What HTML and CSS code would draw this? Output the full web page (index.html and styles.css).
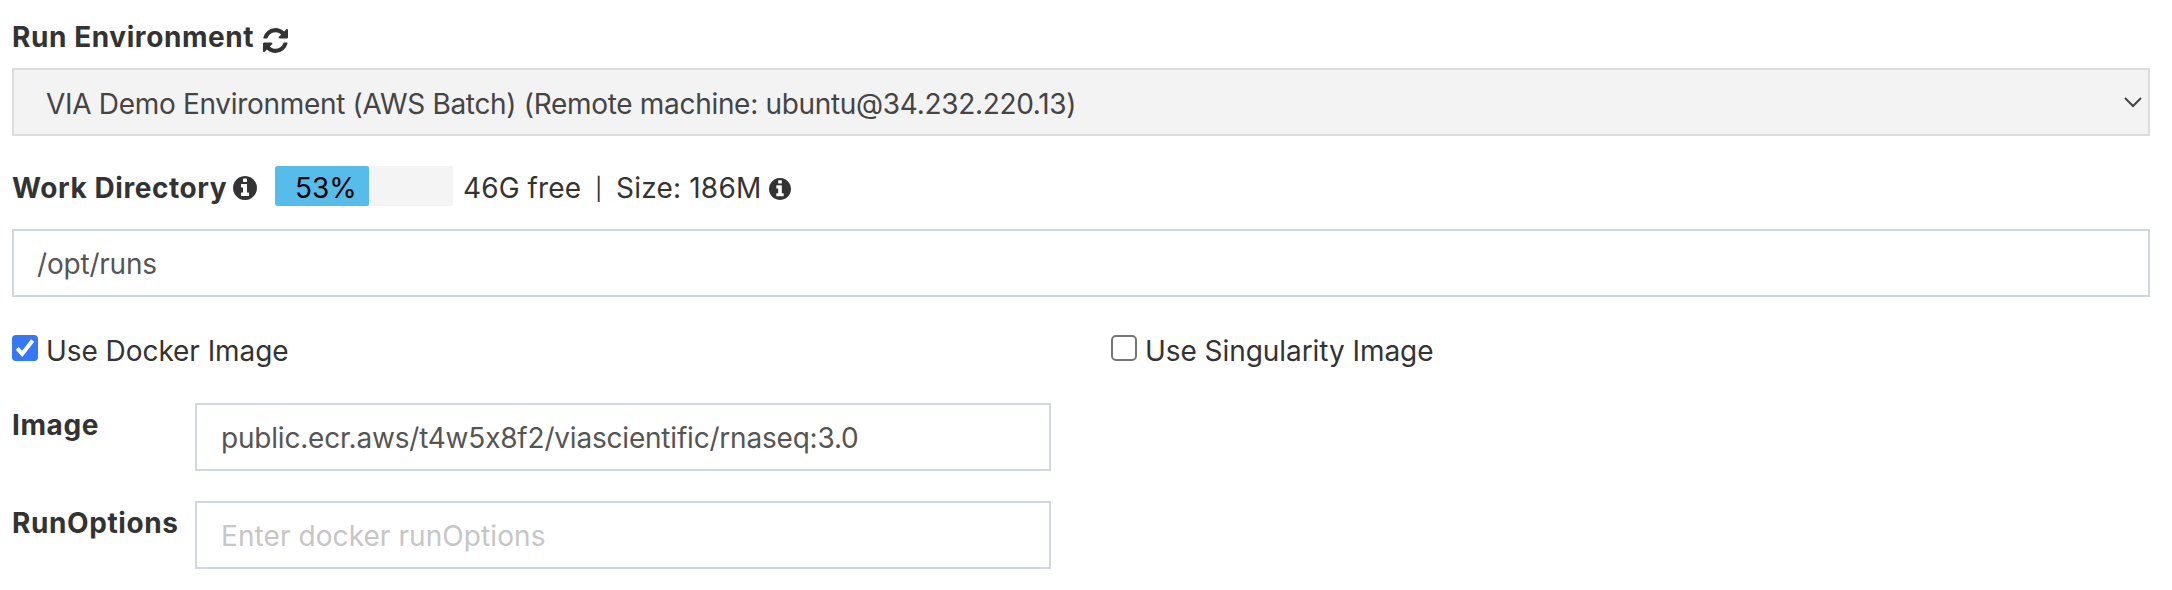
FILE: index.html
```
<!DOCTYPE html>
<html lang="en">
<head>
<meta charset="utf-8">
<title>Run Environment</title>
<link rel="stylesheet" href="styles.css">
</head>
<body>
<svg class="defs" width="0" height="0" aria-hidden="true">
  <symbol id="info" viewBox="0 0 1536 1536"><path d="M1024 1248v-160q0-14-9-23t-23-9h-96V544q0-14-9-23t-23-9H544q-14 0-23 9t-9 23v160q0 14 9 23t23 9h96v320h-96q-14 0-23 9t-9 23v160q0 14 9 23t23 9h448q14 0 23-9t9-23zM896 352V192q0-14-9-23t-23-9H672q-14 0-23 9t-9 23v160q0 14 9 23t23 9h192q14 0 23-9t9-23zm640 416q0 209-103 385.5T1153.5 1433 768 1536t-385.5-103T103 1153.5 0 768t103-385.5T382.5 103 768 0t385.5 103T1433 382.5 1536 768z"/></symbol>
</svg>
<form class="form">
  <div class="heading">
    <label class="label label-env">Run Environment</label>
    <svg class="icon-refresh" viewBox="0 0 1536 1536"><path d="M1511 928q0 5-1 7-64 268-268 434.5T764 1536q-146 0-282.5-55T238 1324l-129 129q-19 19-45 19t-45-19-19-45V960q0-26 19-45t45-19h448q26 0 45 19t19 45-19 45l-137 137q71 66 161 102t187 36q134 0 250-65t186-179q11-17 53-117 8-23 30-23h192q13 0 22.5 9.5t9.5 22.5zm25-800v448q0 26-19 45t-45 19h-448q-26 0-45-19t-19-45 19-45l138-138Q969 256 768 256q-134 0-250 65T332 500q-11 17-53 117-8 23-30 23H50q-13 0-22.5-9.5T18 608v-7q65-268 270-434.5T768 0q146 0 284 55.5T1297 212l130-129q19-19 45-19t45 19 19 45z"/></svg>
  </div>
  <div class="select">
    <span class="select-text">VIA Demo Environment (AWS Batch) (Remote machine: ubuntu@34.232.220.13)</span>
    <svg class="chevron" viewBox="0 0 18 11"><path d="M1 1l8 8 8-8"/></svg>
  </div>
  <div class="workdir">
    <label class="label label-work">Work Directory</label>
    <svg class="icon-info"><use href="#info"/></svg>
    <div class="progress"><div class="bar" style="width:53%"><span class="percent">53%</span></div></div>
    <span class="free">46G free</span>
    <span class="pipe">|</span>
    <span class="size">Size: 186M</span>
    <svg class="icon-info small"><use href="#info"/></svg>
  </div>
  <input class="input input-work" type="text" value="/opt/runs">
  <div class="checks">
    <label class="check"><span class="box checked"><svg viewBox="0 0 26 26"><path d="M5.2 13.3l5 5.6L20.6 5.6"/></svg></span><span class="docker">Use Docker Image</span></label>
    <label class="check"><span class="box"></span><span class="singularity">Use Singularity Image</span></label>
  </div>
  <div class="row">
    <label class="label label-image">Image</label>
    <input class="input input-image" type="text" value="public.ecr.aws/t4w5x8f2/viascientific/rnaseq:3.0">
  </div>
  <div class="row">
    <label class="label label-options">RunOptions</label>
    <input class="input input-options" type="text" placeholder="Enter docker runOptions">
  </div>
</form>
</body>
</html>
```
FILE: styles.css
```
* { box-sizing: border-box; }
body {
  margin: 0;
  background: #fff;
  color: #333;
  font: 28px/40px Inter, "Liberation Sans", sans-serif;
  font-feature-settings: "calt" 0;
  white-space: nowrap;
}
.defs { display: block; }
.form { width: 2150px; padding: 17px 0 0 12px; }
.label { font-weight: 700; letter-spacing: 0.58px; flex: none; }
.heading { display: flex; height: 51px; }
.label-env { width: 251px; }
.icon-refresh { width: 25px; height: 25px; margin-top: 11px; fill: #333; }
.select {
  display: flex;
  justify-content: space-between;
  height: 68px;
  padding: 14px 6px 0 32px;
  border: 2px solid #dcdcdc;
  background: #f3f3f3;
  color: #444;
}
.select-text { letter-spacing: -0.31px; }
.chevron { width: 18px; height: 11px; margin-top: 13px; fill: none; stroke: #444; stroke-width: 2; }
.workdir { display: flex; height: 40px; margin-top: 30px; line-height: 44px; }
.label-work { width: 221px; }
.icon-info { flex: none; width: 24px; height: 24px; margin-top: 10px; fill: #333; }
.icon-info.small { width: 22px; height: 22px; margin-top: 12px; }
.progress { flex: none; width: 178px; height: 40px; margin-left: 18px; border-radius: 2px; background: #f4f4f4; overflow: hidden; }
.bar { height: 40px; padding-left: 20px; border-radius: 2px; background: #57bce9; color: #000; }
.free { width: 142px; padding-left: 10px; letter-spacing: 0.1px; }
.pipe { width: 21px; font-size: 22px; line-height: 46px; }
.size { width: 153px; letter-spacing: 0.2px; }
.input {
  display: block;
  width: 100%;
  height: 68px;
  margin: 0;
  padding: 2px 24px 0;
  border: 2px solid #d2d6de;
  border-radius: 0;
  background: #fff;
  color: #555;
  font: inherit;
  font-feature-settings: inherit;
}
.input::placeholder { color: #c6c6c6; opacity: 1; }
.input-work { margin-top: 23px; padding-left: 23px; letter-spacing: -0.2px; }
.input-image { letter-spacing: -0.2px; }
.input-options { letter-spacing: 0.08px; }
.checks { display: grid; grid-template-columns: 1099px 1fr; margin-top: 34px; margin-bottom: 32px; }
.docker, .singularity { letter-spacing: -0.06px; }
.check { display: flex; }
.box { width: 26px; height: 26px; margin: 4px 8px 0 0; border: 2px solid #767676; border-radius: 5px; }
.box.checked { border: 0; border-radius: 4px; background: #3478f6; }
.box svg { display: block; width: 26px; height: 26px; fill: none; stroke: #fff; stroke-width: 4; }
.row { display: grid; grid-template-columns: 183px 856px; height: 98px; }
.row .label { padding-top: 2px; }
```
